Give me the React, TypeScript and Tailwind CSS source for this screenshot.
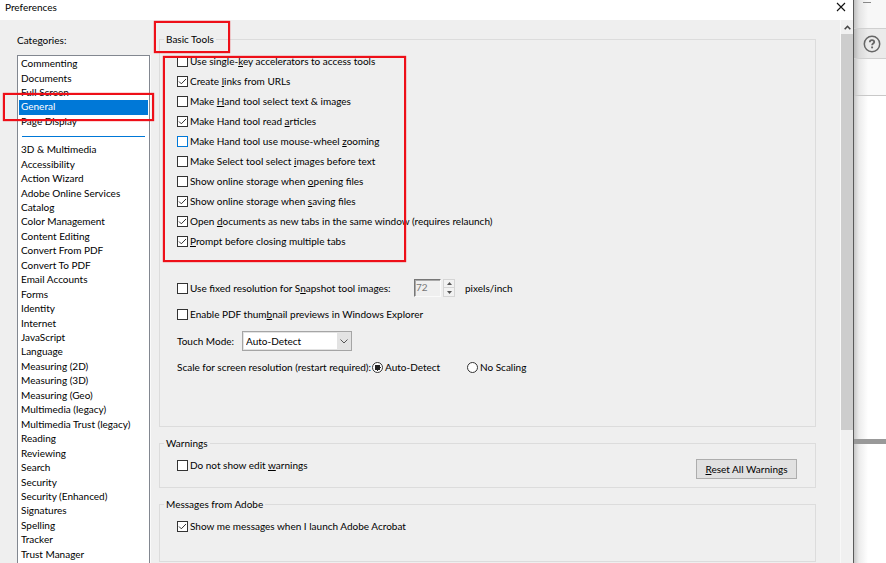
import { useState, type ReactNode } from "react";

const favourites = ["Commenting", "Documents", "Full Screen", "General", "Page Display"];

const categories = [
  "3D & Multimedia", "Accessibility", "Action Wizard", "Adobe Online Services", "Catalog",
  "Color Management", "Content Editing", "Convert From PDF", "Convert To PDF", "Email Accounts",
  "Forms", "Identity", "Internet", "JavaScript", "Language", "Measuring (2D)", "Measuring (3D)",
  "Measuring (Geo)", "Multimedia (legacy)", "Multimedia Trust (legacy)", "Reading", "Reviewing",
  "Search", "Security", "Security (Enhanced)", "Signatures", "Spelling", "Tracker", "Trust Manager",
];

// An underscore marks the letter that follows it as the access key.
const basicTools = [
  { text: "Use single-_key accelerators to access tools", on: false },
  { text: "Create _links from URLs", on: true },
  { text: "Make _Hand tool select text & images", on: false },
  { text: "Make Hand tool read _articles", on: true },
  { text: "Make Hand tool use mouse-wheel _zooming", on: false, hot: true },
  { text: "Make Select tool select _images before text", on: false },
  { text: "Show online storage when _opening files", on: false },
  { text: "Show online storage when _saving files", on: true },
  { text: "Open _documents as new tabs in the same window (requires relaunch)", on: true },
  { text: "_Prompt before closing multiple tabs", on: true },
];

function KeyText({ text }: { text: string }) {
  const at = text.indexOf("_");
  if (at < 0) return <span>{text}</span>;
  return (
    <span>
      {text.slice(0, at)}
      <span className="underline underline-offset-1">{text[at + 1]}</span>
      {text.slice(at + 2)}
    </span>
  );
}

function Check({ text, on = false, hot = false }: { text: string; on?: boolean; hot?: boolean }) {
  return (
    <label className="flex h-5 items-start gap-[2px] pt-1 leading-[11px] whitespace-nowrap">
      <span className="grid shrink-0">
        <input
          type="checkbox"
          defaultChecked={on}
          className={`peer col-start-1 row-start-1 size-[11px] appearance-none border bg-white ${hot ? "border-[#0078d7]" : "border-[#333]"}`}
        />
        <svg viewBox="0 0 11 11" className="pointer-events-none invisible col-start-1 row-start-1 size-[11px] peer-checked:visible" fill="none" stroke="#333" strokeWidth="1">
          <path d="M2 5.5 4.3 7.8 9 3" />
        </svg>
      </span>
      <KeyText text={text} />
    </label>
  );
}

function Radio({ text, on = false }: { text: string; on?: boolean }) {
  return (
    <label className="flex items-center gap-[2px] whitespace-nowrap">
      <input
        type="radio"
        name="scale"
        defaultChecked={on}
        className="size-[11px] appearance-none rounded-full border border-[#333] bg-white checked:bg-[radial-gradient(circle,#222_0_3px,#fff_3px)]"
      />
      {text}
    </label>
  );
}

function Group({ title, children, className }: { title: string; children: ReactNode; className: string }) {
  return (
    <fieldset className={`border border-[#dcdcdc] pl-[17px] ${className}`}>
      <legend className="-ml-[13px] px-[2px] leading-[14px]">{title}</legend>
      {children}
    </fieldset>
  );
}

export default function App() {
  const [selected, setSelected] = useState("General");

  const item = (name: string) => (
    <button
      key={name}
      type="button"
      onClick={() => setSelected(name)}
      className={`flex items-center pb-[2px] pl-[2px] text-left leading-[12px] whitespace-nowrap ${selected === name ? "bg-[#0078d7] text-white" : ""}`}
    >
      {name}
    </button>
  );

  return (
    <div className="relative flex h-screen overflow-hidden bg-white font-['Lato','Open_Sans',sans-serif] text-[10px] leading-[14px] text-black">
      <div className="flex min-w-0 flex-1 flex-col border-r border-[#5a5a5a] bg-[#efefef]">
        <header className="flex h-5 shrink-0 items-start justify-between bg-white pr-[7px] pl-[5px]">
          <h1>Preferences</h1>
          <button type="button" aria-label="Close" className="pt-[2px]">
            <svg viewBox="0 0 10 10" className="size-[10px]" stroke="#111" strokeWidth="1.1">
              <path d="M1 1 9 9M9 1 1 9" />
            </svg>
          </button>
        </header>

        <div className="flex min-h-0 flex-1">
          <nav className="w-[150px] shrink-0 pt-[13px] pl-[17px]" aria-label="Categories">
            <h2>
              Cate<span className="underline underline-offset-1">g</span>ories:
            </h2>
            <div className="mt-2 border border-[#828790] bg-white px-px pt-px pb-3 shadow-[1px_0_#fafafa]">
              <div className="grid h-[72px] auto-rows-fr">{favourites.map(item)}</div>
              <hr className="mx-[3px] mt-[7px] mb-[6px] border-[#0078d7]" />
              <div className="grid h-[419px] auto-rows-fr">{categories.map(item)}</div>
            </div>
          </nav>

          <main className="min-w-0 flex-1 pt-3 pr-6 pl-[9px]">
            <Group title="Basic Tools" className="h-[395px]">
              <div className="mt-[6px]">
                {basicTools.map((tool) => (
                  <Check key={tool.text} {...tool} />
                ))}
              </div>
              <div className="mt-[27px] flex h-[18px] items-start">
                <div className="w-[237px]">
                  <Check text="Use fixed resolution for S_napshot tool images:" />
                </div>
                <input
                  aria-label="Pixels per inch"
                  disabled
                  defaultValue="72"
                  className="h-[18px] w-[27px] border border-r-[#fafafa] border-b-[#fafafa] border-t-[#777] border-l-[#777] pb-[2px] pl-px leading-[14px] text-[#777] shadow-[inset_1px_1px_#aaa]"
                />
                <div className="ml-[2px] grid h-[18px] w-3 grid-rows-2 border border-[#d5d5d5] bg-[#f2f2f2]">
                  <button type="button" aria-label="Increase" className="flex items-center justify-center border-b border-[#d5d5d5]">
                    <svg viewBox="0 0 5 3" className="h-[3px] w-[5px]"><path d="M0 3 2.5 0 5 3Z" fill="#555" /></svg>
                  </button>
                  <button type="button" aria-label="Decrease" className="flex items-center justify-center">
                    <svg viewBox="0 0 5 3" className="h-[3px] w-[5px]"><path d="M0 0 2.5 3 5 0Z" fill="#555" /></svg>
                  </button>
                </div>
                <span className="ml-[10px] pt-[2px]">pixels/inch</span>
              </div>
              <div className="mt-2">
                <Check text="Enable PDF thum_bnail previews in Windows Explorer" />
              </div>
              <div className="mt-[6px] flex h-5 items-center">
                <label htmlFor="touch" className="w-[65px]">Touch Mode:</label>
                <div className="grid h-5 w-[110px] border border-[#a5a5a5] bg-[#e3e3e3]">
                  <select id="touch" className="col-start-1 row-start-1 m-px mr-[14px] appearance-none bg-white pb-px pl-[2px] leading-[14px]">
                    <option>Auto-Detect</option>
                    <option>Mouse</option>
                    <option>Touch</option>
                  </select>
                  <svg viewBox="0 0 8 5" className="pointer-events-none col-start-1 row-start-1 mr-[3px] h-[5px] w-2 self-center justify-self-end" fill="none" stroke="#555">
                    <path d="M.5 .5 4 4 7.5 .5" />
                  </svg>
                </div>
              </div>
              <div className="mt-[9px] flex items-center">
                <span className="w-[195px] whitespace-nowrap">Scale for screen resolution (restart required):</span>
                <div className="w-[95px]"><Radio text="Auto-Detect" on /></div>
                <Radio text="No Scaling" />
              </div>
            </Group>

            <Group title="Warnings" className="mt-[9px] h-[52px]">
              <div className="flex items-start justify-between pr-[18px]">
                <div className="pt-[6px]"><Check text="Do not show edit _warnings" /></div>
                <button type="button" className="mt-[9px] h-5 w-[101px] border border-[#adadad] bg-[#e1e1e1] leading-[14px]">
                  <KeyText text="_Reset All Warnings" />
                </button>
              </div>
            </Group>

            <Group title="Messages from Adobe" className="mt-[9px] h-[65px]">
              <div className="pt-[6px]"><Check text="Show me messages when I launch Adobe Acrobat" on /></div>
            </Group>
          </main>

          <div className="flex w-[13px] shrink-0 flex-col border-l border-[#f8f8f8] bg-[#f0f0f0]">
            <button type="button" aria-label="Scroll up" className="flex h-[14px] items-center justify-center">
              <svg viewBox="0 0 7 5" className="h-[5px] w-[7px]" fill="none" stroke="#444" strokeWidth="1.6">
                <path d="M.7 4.3 3.5 1.3 6.3 4.3" />
              </svg>
            </button>
            <div className="h-[73%] bg-[#cdcdcd]" />
          </div>
        </div>
      </div>

      <aside className="flex w-8 shrink-0 flex-col bg-[linear-gradient(to_right,#c8c8c8,#ececec_5px,#fff_14px)]">
        <div className="h-7 bg-black/3">
          <div className="mt-[2px] ml-[9px] h-px w-2 bg-[#888]" />
        </div>
        <div className="flex h-[31px] items-center justify-center border-y border-[#d0d0d0] bg-black/8 pl-1">
          <button type="button" aria-label="Help">
            <svg viewBox="0 0 18 18" className="size-[18px]" fill="none" stroke="#666" strokeWidth="1.5">
              <circle cx="9" cy="9" r="7.7" />
              <path d="M6.8 7.2c0-1.4 1-2.1 2.2-2.1s2.2.8 2.2 1.9c0 1.5-2.1 1.6-2.1 3.2" strokeWidth="1.8" />
              <path d="M9.1 11.5v1.8" strokeWidth="1.9" />
            </svg>
          </button>
        </div>
        <div className="h-[37px] border-b border-[#c8c8c8] bg-black/2" />
        <div className="mt-[343px] h-[5px] bg-[#999]" />
      </aside>

      <div className="pointer-events-none absolute top-[21px] left-[154px] h-8 w-[76px] border-2 border-[#ee0f18] shadow-[0_0_1px_#ee0f18]" />
      <div className="pointer-events-none absolute top-[93px] left-[3px] h-7 w-[151px] border-2 border-[#ee0f18] shadow-[0_0_1px_#ee0f18]" />
      <div className="pointer-events-none absolute top-14 left-[163px] h-[206px] w-[243px] border-2 border-[#ee0f18] shadow-[0_0_1px_#ee0f18]" />
    </div>
  );
}
